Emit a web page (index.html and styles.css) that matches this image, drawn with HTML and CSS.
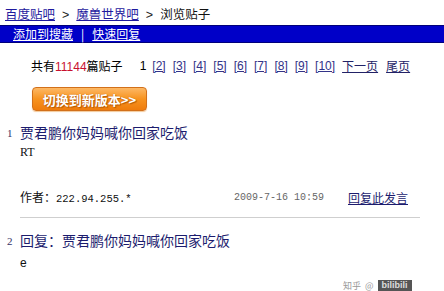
FILE: index.html
```html
<!DOCTYPE html>
<html>
<head>
<meta charset="utf-8">
<link rel="stylesheet" href="styles.css">
</head>
<body>
<div class="crumb"><a href="#">百度贴吧</a><span class="gt">&gt;</span><a href="#">魔兽世界吧</a><span class="gt">&gt;</span>浏览贴子</div>
<div class="bar"><a href="#">添加到搜藏</a><span class="sep">|</span><a href="#">快速回复</a></div>
<div class="pager">
  <span class="total">共有<span class="red">11144</span>篇贴子</span>
  <span class="cur">1</span>
  <a href="#">[2]</a><a href="#">[3]</a><a href="#">[4]</a><a href="#">[5]</a><a href="#">[6]</a><a href="#">[7]</a><a href="#">[8]</a><a href="#">[9]</a><a href="#">[10]</a><a href="#" class="cn">下一页</a><a href="#" class="cn">尾页</a>
</div>
<div class="btnrow"><span class="btn">切换到新版本&gt;&gt;</span></div>
<div class="post">
  <div class="title"><span class="num">1</span>贾君鹏你妈妈喊你回家吃饭</div>
  <div class="body">RT</div>
  <div class="meta">
    <span class="author">作者：<span class="ip">222.94.255.*</span></span>
    <span class="date">2009-7-16 10:59</span>
    <a href="#" class="reply">回复此发言</a>
  </div>
</div>
<div class="post second">
  <div class="title"><span class="num">2</span>回复：贾君鹏你妈妈喊你回家吃饭</div>
  <div class="body">e</div>
</div>
<div class="mark"><span class="mk1">知乎</span><span class="mk2">@</span><span class="mk3">bilibili</span></div>
</body>
</html>
```
FILE: styles.css
```css
html, body {
  margin: 0;
  padding: 0;
  background: #fff;
}
body {
  font-family: "Noto Sans CJK SC", "Liberation Sans", sans-serif;
  font-size: 12px;
  color: #000;
  position: relative;
  width: 444px;
  height: 291px;
  overflow: hidden;
}
a {
  color: #1f1a9e;
  text-decoration: underline;
}
.crumb {
  padding: 3px 0 0 5px;
  height: 22px;
  line-height: 22px;
  font-size: 12.5px;
  color: #111;
}
.crumb .gt {
  margin: 0 7px;
  font-family: "Liberation Sans", sans-serif;
  color: #222;
}
.bar {
  height: 16px;
  line-height: 16px;
  background: #0000c8;
  border-top: 1px solid #00007a;
  border-bottom: 1px solid #00007a;
  padding-left: 13px;
  font-size: 12px;
  color: #fff;
}
.bar a {
  color: #fff;
}
.bar .sep {
  margin: 0 8px;
}
.pager {
  margin-top: 15px;
  padding-left: 31px;
  height: 16px;
  line-height: 16px;
  display: flex;
  align-items: center;
  font-size: 12px;
}
.pager .red {
  color: #c8102e;
  font-family: "Liberation Sans", sans-serif;
}
.pager .cur {
  margin-left: 17px;
  margin-right: 6px;
  font-family: "Liberation Sans", sans-serif;
}
.pager a {
  color: #333388;
  font-family: "Liberation Sans", sans-serif;
  margin-right: 7px;
}
.pager a.cn {
  font-family: "Noto Sans CJK SC", sans-serif;
  color: #222266;
  margin-right: 8px;
}
.btnrow {
  margin-top: 13px;
  padding-left: 32px;
  height: 24px;
}
.btn {
  display: flex;
  align-items: center;
  justify-content: center;
  width: 113px;
  height: 22px;
  border: 1px solid #d2701a;
  border-radius: 4px;
  background: linear-gradient(#fdb865, #f7931f 50%, #ef7c0c);
  color: #fff;
  font-weight: bold;
  font-size: 13px;
  text-shadow: 0 0 1px #b85a05, 1px 1px 1px #b85a05;
  box-shadow: 0 1px 1px #f3c99a;
}
.post {
  width: 400px;
  padding-left: 20px;
}
.title {
  position: relative;
  margin-top: 12px;
  height: 18px;
  line-height: 18px;
  font-size: 14px;
  color: #1c1c6e;
}
.num {
  position: absolute;
  left: -13px;
  top: 1px;
  font-size: 11px;
  font-family: "Liberation Serif", serif;
  color: #333366;
}
.body {
  margin-top: 3px;
  height: 16px;
  line-height: 16px;
  font-family: "Liberation Serif", serif;
  font-size: 12px;
  color: #111;
}
.meta {
  margin-top: 30px;
  height: 16px;
  line-height: 16px;
  display: flex;
  align-items: center;
  padding-right: 12px;
  padding-bottom: 11px;
  border-bottom: 1px solid #cfcfcf;
}
.author {
  font-size: 12px;
  color: #111;
}
.ip {
  font-family: "Liberation Mono", monospace;
  font-size: 10.5px;
}
.date {
  margin-left: auto;
  font-family: "Liberation Mono", monospace;
  font-size: 10px;
  color: #666;
}
.reply {
  margin-left: 24px;
  font-size: 12px;
  color: #1c1c6e;
}
.second .title {
  margin-top: 13px;
}
.second .body {
  margin-top: 6px;
  font-family: "Liberation Sans", sans-serif;
}
.mark {
  position: absolute;
  left: 343px;
  top: 280px;
  height: 11px;
  display: flex;
  align-items: center;
  gap: 4px;
  font-size: 9px;
  line-height: 11px;
  color: #999;
}
.mark .mk3 {
  background: #555;
  color: #ddd;
  font-weight: bold;
  padding: 0 4px;
  font-family: "Liberation Sans", sans-serif;
}
```
